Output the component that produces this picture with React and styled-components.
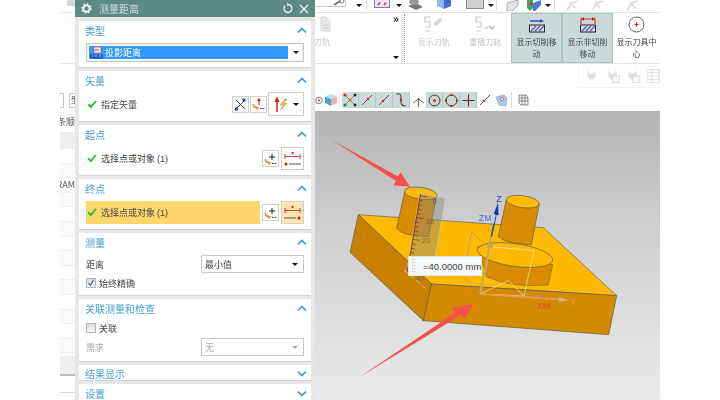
import React from 'react'
import styled, { createGlobalStyle } from 'styled-components'

const GlobalStyle = createGlobalStyle`
  html, body {
    margin: 0;
    padding: 0;
    background: #fff;
  }
  body {
    font-family: "Noto Sans CJK SC", "Liberation Sans", sans-serif;
  }
`

const Page = styled.div`
  width: 720px;
  height: 400px;
  overflow: hidden;
  background: #fff;
  padding-left: 60px;
  box-sizing: border-box;
`

const Shot = styled.div`
  width: 600px;
  height: 400px;
  display: flex;
  overflow: hidden;
  filter: blur(0.5px);
`

/* left table column, mostly hidden behind the dialog */
const TableColumn = styled.div`
  width: 15px;
  flex: none;
  display: flex;
  flex-direction: column;
  overflow: hidden;
  color: #555;
  font-size: 9px;
`

const TableTop = styled.div`
  height: 12px;
  border-bottom: 1px solid #e6e6e6;
  display: flex;
  justify-content: flex-end;
`

const TopChip = styled.div`
  width: 8px;
  height: 6px;
  background: #d8d8d4;
`

const TableRibbon = styled.div`
  height: 50px;
  border-bottom: 1px solid #e8e8e8;
`

const InputRow = styled.div`
  height: 15px;
  margin-top: 29px;
  display: flex;
  justify-content: space-between;
`

const TinyInput = styled.div`
  width: ${p => p.$w}px;
  box-sizing: border-box;
  border: 1px solid #c8c8c8;
  border-left-width: ${p => (p.$open ? 0 : 1)}px;
  border-right-width: ${p => (p.$open ? 1 : 0)}px;
  font-size: 8px;
  line-height: 12px;
  padding-left: 1px;
  overflow: hidden;
  color: #444;
`

const TableLabel = styled.div`
  height: 12px;
  line-height: 12px;
  margin-top: 8px;
  white-space: nowrap;
  display: flex;
  justify-content: flex-end;
  overflow: hidden;
`

const HeaderBand = styled.div`
  height: ${p => p.$h}px;
  flex: none;
  margin-top: ${p => p.$top || 0}px;
  background: #eeeeee;
  border-bottom: ${p => (p.$line ? '2px solid #bdbdbd' : '0')};
`

const TableRow = styled.div`
  height: 14.6px;
  flex: none;
  box-sizing: border-box;
  background: ${p => (p.$odd ? '#fafafa' : '#fff')};
  border-bottom: 1px solid #f0f0f0;
  line-height: 14px;
  white-space: nowrap;
  overflow: hidden;
  display: flex;
  justify-content: flex-end;
`

const TableFoot = styled.div`
  height: 16px;
  flex: none;
  border-bottom: 1px solid #d8d8d8;
`

/* measure dialog */
const Dialog = styled.div`
  width: 240px;
  flex: none;
  height: 400px;
  background: #e7e7e7;
  display: flex;
  flex-direction: column;
`

const TitleBar = styled.div`
  height: 17px;
  flex: none;
  background: #5c8b85;
  color: #cfdedb;
  font-size: 10px;
  display: flex;
  align-items: center;
  padding: 0 6px 0 6px;
  gap: 5px;
`

const TitleText = styled.span`
  flex: 1;
  margin-left: 2px;
`

const Sections = styled.div`
  display: flex;
  flex-direction: column;
  gap: 3px;
  padding: 4px 4px 0;
`

const Section = styled.section`
  height: ${p => p.$h}px;
  flex: none;
  box-sizing: border-box;
  background: #fff;
  border-bottom: 1px solid #d2d2d2;
  padding: 0 7px;
`

const SectionHead = styled.div`
  height: ${p => p.$h || 18}px;
  display: flex;
  align-items: center;
  justify-content: space-between;
  margin: 0 -3px 0 -1px;
  color: #4b9ed3;
  font-size: 10px;
`

const Row = styled.div`
  height: ${p => p.$h}px;
  margin-top: ${p => p.$top}px;
  display: flex;
  align-items: center;
  color: #444;
  font-size: 9px;
`

const Grow = styled.div`
  flex: 1;
  display: flex;
  align-items: center;
  gap: 4px;
  padding-left: 1px;
  height: 100%;
  background: ${p => (p.$hot ? '#fdd66e' : 'transparent')};
`

const Latin = styled.span`
  font-family: "Liberation Sans", sans-serif;
  margin-left: -2px;
`

const Caret = styled.span`
  width: 0;
  height: 0;
  border-left: 3px solid transparent;
  border-right: 3px solid transparent;
  border-top: 3px solid ${p => p.$color || '#111'};
  flex: none;
`

const TypeSelect = styled.div`
  height: 19px;
  margin-top: 4px;
  box-sizing: border-box;
  border: 1px solid #c9c9c9;
  box-shadow: inset 0 0 0 1px #efefef;
  padding: 2px 4px 2px 2px;
  display: flex;
  align-items: center;
  gap: 5px;
`

const TypeValue = styled.div`
  width: 201px;
  height: 100%;
  background: #3298fa;
  color: #fff;
  font-size: 9px;
  display: flex;
  align-items: center;
  gap: 2px;
  padding-left: 1px;
  box-sizing: border-box;
`

const IconButton = styled.div`
  width: ${p => p.$big ? 23 : 17}px;
  height: ${p => p.$big ? 23 : 17}px;
  margin-left: ${p => p.$gap ?? 2}px;
  flex: none;
  box-sizing: border-box;
  border: 1px solid #cfcfcf;
  background: ${p => (p.$hot ? '#fde7ae' : '#fff')};
  display: flex;
  align-items: center;
  justify-content: center;
`

const VectorCombo = styled(IconButton)`
  width: 36px;
  height: 24px;
  gap: 4px;
  margin-left: 1px;
`

const Combo = styled.div`
  width: 103px;
  height: 18px;
  margin-left: auto;
  box-sizing: border-box;
  border: 1px solid #c9c9c9;
  padding: 0 5px 0 3px;
  display: flex;
  align-items: center;
  justify-content: space-between;
  color: ${p => (p.$off ? '#aaa' : '#444')};
`

const CheckBox = styled.span`
  width: 10px;
  height: 10px;
  box-sizing: border-box;
  border: 1px solid #b5b5b5;
  background: linear-gradient(#ddd, #f4f4f4);
  margin-right: 3px;
  display: flex;
  align-items: center;
  justify-content: center;
  flex: none;
`

const DimLabel = styled.span`
  color: #aaa;
`

/* right part: ribbon, toolbars and the graphics window */
const Workspace = styled.div`
  flex: 1;
  min-width: 0;
  display: flex;
  flex-direction: column;
`

const QuickBar = styled.div`
  height: 12px;
  flex: none;
  border-bottom: 1px solid #e2e2e2;
  display: flex;
  align-items: flex-start;
  overflow: hidden;
`

const QuickField = styled.div`
  width: 31px;
  height: 7px;
  box-sizing: border-box;
  border-bottom: 1px solid #ccc;
  border-right: 1px solid #ccc;
  display: flex;
  justify-content: flex-end;
  align-items: flex-end;
`

const QuickItem = styled.div`
  margin-left: ${p => p.$ml}px;
  display: flex;
  opacity: ${p => (p.$faint ? 0.35 : 1)};
`

const QuickCaret = styled(Caret)`
  margin: 4px 0 0 ${p => p.$ml}px;
`

const QuickSep = styled.div`
  width: 1px;
  height: 10px;
  background: #ddd;
  margin-left: ${p => p.$ml}px;
`

const Ribbon = styled.div`
  height: 50px;
  flex: none;
  border-bottom: 1px solid #e2e2e2;
  display: flex;
`

const RibbonGroup = styled.div`
  width: 87px;
  flex: none;
  box-sizing: border-box;
  border-right: 1px solid #e4e4e4;
  display: flex;
  justify-content: space-between;
`

const GroupMarks = styled.div`
  width: 10px;
  padding: 0 0 4px;
  display: flex;
  flex-direction: column;
  align-items: center;
  justify-content: space-between;
  font-size: 11px;
  font-weight: 700;
  line-height: 10px;
  color: #222;
`

const Grip = styled.div`
  width: 0;
  margin: 1px 3px 1px 2px;
  border-left: 1px dotted #999;
`

const RibbonTool = styled.div`
  width: ${p => p.$w}px;
  flex: none;
  box-sizing: border-box;
  padding-top: 3px;
  display: flex;
  flex-direction: column;
  align-items: center;
  font-size: 8px;
  line-height: 11.5px;
  text-align: center;
  color: ${p => (p.$faint ? '#c4c4c4' : '#444')};
  background: ${p => (p.$on ? '#c9dad8' : 'transparent')};
  outline: ${p => (p.$on ? '1px solid #aac6c2' : 'none')};
  outline-offset: -1px;
`

const ClippedTool = styled(RibbonTool)`
  width: 18px;
  align-items: flex-end;
  overflow: hidden;
  white-space: nowrap;
`

const ToolLabel = styled.div`
  margin-top: 3px;
  padding: 0 3px;
`

const SubBar = styled.div`
  height: 25px;
  flex: none;
  display: flex;
  justify-content: flex-end;
`

const FadedIcons = styled.div`
  width: 82px;
  height: 24px;
  box-sizing: border-box;
  border-left: 1px solid #eee;
  border-bottom: 1px solid #e6e6e6;
  display: flex;
  align-items: center;
  gap: 6px;
  padding-left: 6px;
  opacity: 0.45;
  overflow: hidden;
`

const ViewBar = styled.div`
  height: 22px;
  flex: none;
  display: flex;
  align-items: center;
  overflow: hidden;
`

const ViewCell = styled.div`
  width: ${p => p.$w || 17}px;
  height: 16px;
  flex: none;
  margin-left: ${p => p.$ml || 0}px;
  display: flex;
  align-items: center;
  justify-content: center;
  box-sizing: border-box;
  background: ${p => (p.$on ? '#c9dad8' : 'transparent')};
  border-right: ${p => (p.$on ? '1px solid #aec8c4' : '0')};
`

const ViewSep = styled.div`
  width: 1px;
  height: 16px;
  flex: none;
  background: #ddd;
  margin: 0 ${p => p.$r || 2}px 0 ${p => p.$l || 2}px;
`

const Viewport = styled.div`
  flex: 1;
  position: relative;
  overflow: hidden;
  background: linear-gradient(#b4b4b4 0%, #cfcfd0 40%, #e9eaeb 100%);
`

const Scene = styled.svg`
  display: block;
  width: 345px;
  height: 289px;
`

const SceneText = styled.text`
  font-family: "Liberation Sans", sans-serif;
  font-size: ${p => p.$size || 27}px;
  fill: ${p => p.$fill};
`

const ValueTag = styled.div`
  position: absolute;
  left: 93px;
  top: 145px;
  width: 74px;
  height: 20px;
  box-sizing: border-box;
  background: #f4f8f8;
  border: 1px solid #e4e4e4;
  display: flex;
  align-items: center;
  padding-left: 2px;
  font-family: "Liberation Sans", sans-serif;
  font-size: 9.5px;
  color: #444;
  white-space: nowrap;
`

const TagGrip = styled.div`
  width: 5px;
  height: 16px;
  flex: none;
  margin-right: 7px;
  background-image: radial-gradient(#aaa 35%, transparent 40%);
  background-size: 2.5px 3px;
`

/* drawings */
const Chevron = ({ down }) => (
  <svg width="10" height="7" viewBox="0 0 10 7">
    <path d={down ? 'M1 1.5 L5 5.5 L9 1.5' : 'M1 5.5 L5 1.5 L9 5.5'} fill="none" stroke="#3a9ad9" strokeWidth="1.7" />
  </svg>
)

const Check = () => (
  <svg width="10" height="9" viewBox="0 0 10 9">
    <path d="M0.5 5 L2 3.6 L3.8 5.4 L8.4 0.6 L9.6 1.6 L3.9 8.4 Z" fill="#25c03a" />
  </svg>
)

const SmallCheck = () => (
  <svg width="8" height="8" viewBox="0 0 8 8">
    <path d="M1.5 4 L3.3 6.4 L6.5 1" fill="none" stroke="#4a5aa8" strokeWidth="1.2" />
  </svg>
)

const Gear = () => (
  <svg width="11" height="11" viewBox="0 0 11 11">
    <circle cx="5.5" cy="5.5" r="3.2" fill="none" stroke="#eef3f2" strokeWidth="2" />
    <circle cx="5.5" cy="5.5" r="4.6" fill="none" stroke="#eef3f2" strokeWidth="1.4" strokeDasharray="1.6 2" />
  </svg>
)

const Reset = () => (
  <svg width="11" height="11" viewBox="0 0 11 11">
    <path d="M2 2.8 A4 4 0 1 0 5.5 1.5" fill="none" stroke="#eef3f2" strokeWidth="1.3" />
    <path d="M4 0 L7 1.6 L4.4 3.4 Z" fill="#eef3f2" />
  </svg>
)

const Close = () => (
  <svg width="10" height="10" viewBox="0 0 10 10">
    <path d="M1 1 L9 9 M9 1 L1 9" stroke="#f2f6f5" strokeWidth="1.4" />
  </svg>
)

const ProjectIcon = () => (
  <svg width="13" height="13" viewBox="0 0 13 13">
    <rect x="4" y="1" width="7" height="6" fill="#f3e9ea" stroke="#b44" strokeWidth="0.6" />
    <path d="M1 12 H12 M1 8 V12 M4 8 V12 M8 8 V12 M12 8 V12" stroke="#123a9a" strokeWidth="1" />
    <path d="M5 4 H9" stroke="#d33" strokeWidth="1" />
  </svg>
)

const CrossIcon = () => (
  <svg width="13" height="13" viewBox="0 0 13 13">
    <path d="M2 2 L11 11 M11 2 L2 11" stroke="#333" strokeWidth="0.9" />
    <rect x="8.5" y="0.5" width="3" height="3" fill="#1f3fd0" />
    <rect x="1" y="9.5" width="3" height="3" fill="#1f3fd0" />
  </svg>
)

const Swoosh = () => <path d="M1 7 Q2 11 6 11 L4.6 12.6 M6 11 L3.8 9.8" fill="none" stroke="#e8842a" strokeWidth="1.4" />

const Dashes = () => <path d="M8 11.5 H13" stroke="#333" strokeWidth="1.1" strokeDasharray="1 0.6" />

const UpPickIcon = () => (
  <svg width="14" height="14" viewBox="0 0 14 14">
    <Swoosh />
    <Dashes />
    <path d="M7 8 V2" stroke="#c22" strokeWidth="1" />
    <path d="M5 4 L7 0.8 L9 4 Z" fill="#c22" />
  </svg>
)

const PlusPickIcon = () => (
  <svg width="14" height="14" viewBox="0 0 14 14">
    <Swoosh />
    <Dashes />
    <path d="M8 2 V8 M5 5 H11" stroke="#222" strokeWidth="1" />
  </svg>
)

const BoltVectorIcon = () => (
  <svg width="16" height="18" viewBox="0 0 16 18">
    <path d="M4 17 V6" stroke="#c22" strokeWidth="1.5" />
    <path d="M1.5 7 L4 1.5 L6.5 7 Z" fill="#d11" />
    <path d="M12 4 L7 10 L10 10 L7.5 15 L14 8.5 L11 8.5 L14 4 Z" fill="#f0c840" stroke="#9a8a50" strokeWidth="0.5" />
  </svg>
)

const MeasureIcon = ({ right }) => (
  <svg width="19" height="19" viewBox="0 0 19 19">
    <path d="M2 5 V10 M17 5 V10 M2 7.5 H17" stroke="#d22" strokeWidth="0.9" />
    <rect x="8.5" y="3" width="2" height="2" fill="#d22" />
    <path d={right ? 'M1 15 H13' : 'M6 15 H18'} stroke="#555" strokeWidth="1" />
    <circle cx={right ? 16 : 3} cy="15" r="1.5" fill="#d11" />
  </svg>
)

const FadedDocIcon = () => (
  <svg width="16" height="17" viewBox="0 0 16 17">
    <path d="M4 1 H9 L13 6 V15 H4 Z" fill="#e8e8e8" stroke="#d4d4d4" />
    <path d="M6 9 H11 M6 12 H11" stroke="#ccc" />
  </svg>
)

const PathIcon = ({ replay }) => (
  <svg width="20" height="17" viewBox="0 0 20 17" opacity="0.7">
    <path d="M7 1 H1 V6 H6 V11 H1 M1 15 H6" fill="none" stroke="#b4b4b4" strokeWidth="1.2" />
    {replay
      ? <path d="M10 13 Q14 8 18 13 M18 13 L19 10 M18 13 L15 12" fill="none" stroke="#999" strokeWidth="1.1" />
      : <path d="M9 8 L14 3 L18 2 L17 6 L12 10 Z" fill="#c4c4c4" />}
  </svg>
)

const CutMoveIcon = ({ rapid }) => (
  <svg width="18" height="17" viewBox="0 0 18 17">
    {rapid
      ? <path d="M2 8 V3 H16 V8" fill="none" stroke="#d22" strokeWidth="1.1" />
      : <path d="M2 5 H13" stroke="#2a5fb8" strokeWidth="1.6" />}
    {rapid ? <path d="M5 1 L2 3 L5 5 Z M13 1 L16 3 L13 5 Z" fill="#d22" /> : <path d="M12 3 L16 5 L12 7 Z" fill="#2a5fb8" />}
    <rect x="1.5" y="9" width="15" height="7" fill="#d9d7ee" stroke="#222" />
    <path d="M3 15 L8 10 M7 15 L12 10 M11 15 L16 10" stroke="#5a58b0" strokeWidth="1.2" />
  </svg>
)

const CenterIcon = () => (
  <svg width="17" height="17" viewBox="0 0 17 17">
    <circle cx="8.5" cy="8.5" r="7.5" fill="#fff" stroke="#666" />
    <path d="M6.5 8.5 H10.5 M8.5 6.5 V10.5" stroke="#e11" strokeWidth="1.2" />
  </svg>
)

const FadedPartIcon = ({ variant }) => (
  <svg width="18" height="18" viewBox="0 0 18 18">
    <path d="M3 2 L6 6 L10 6 L13 2 L13 10 L8 15 L3 10 Z" fill="#bbb" />
    {variant ? <rect x="8" y="9" width="9" height="8" fill="#eee" stroke="#aaa" /> : null}
  </svg>
)

const FadedGrid = () => (
  <svg width="16" height="18" viewBox="0 0 16 18">
    <path d="M1 1 H15 V17 H1 Z M1 5 H15 M1 9 H15 M1 13 H15 M6 1 V17" fill="none" stroke="#aaa" />
  </svg>
)

const Cube = () => (
  <svg width="14" height="14" viewBox="0 0 14 14">
    <path d="M7 1 L13 3.5 L7 6 L1 3.5 Z" fill="#b9dcf5" />
    <path d="M1 3.5 L7 6 V13 L1 10 Z" fill="#4b9ee0" />
    <path d="M13 3.5 L7 6 V13 L13 10 Z" fill="#e9b9a8" />
  </svg>
)

const SnapSet = () => (
  <svg width="14" height="14" viewBox="0 0 14 14">
    <circle cx="7" cy="7" r="2" fill="#f3c52c" />
    <path d="M2 2 L12 12 M12 2 L2 12" stroke="#555" strokeWidth="0.6" />
    <circle cx="2" cy="2" r="1.5" fill="#d22" />
    <circle cx="12" cy="2" r="1.5" fill="#222" />
    <circle cx="2" cy="12" r="1.5" fill="#1a8a3a" />
    <circle cx="12" cy="12" r="1.5" fill="#222" />
  </svg>
)

const LineSnap = ({ dot = 5 }) => (
  <svg width="12" height="12" viewBox="0 0 12 12">
    <path d="M1 11 L11 1" stroke="#555" strokeWidth="1" />
    <circle cx={dot} cy={12 - dot} r="1.3" fill="#d22" />
  </svg>
)

const CurveSnap = () => (
  <svg width="12" height="14" viewBox="0 0 12 14">
    <path d="M1 1 H4 Q6 1 6 5 V9 Q6 13 11 13" fill="none" stroke="#444" strokeWidth="1.1" />
    <circle cx="6" cy="7" r="1.2" fill="#d22" />
  </svg>
)

const ForkSnap = () => (
  <svg width="13" height="13" viewBox="0 0 13 13">
    <path d="M6.5 13 V5 M6.5 5 L1 9 M6.5 5 L12 9" fill="none" stroke="#555" strokeWidth="0.9" />
    <circle cx="6.5" cy="5" r="1" fill="#d22" />
  </svg>
)

const RingSnap = ({ inner }) => (
  <svg width="13" height="13" viewBox="0 0 13 13">
    <circle cx="6.5" cy="6.5" r="5.4" fill="none" stroke="#333" strokeWidth="1" />
    {inner
      ? <circle cx="6.5" cy="6.5" r="1.5" fill="#d22" />
      : <path d="M6.5 0 V2 M6.5 11 V13 M0 6.5 H2 M11 6.5 H13" stroke="#e11" strokeWidth="2" />}
  </svg>
)

const CrossSnap = () => (
  <svg width="13" height="13" viewBox="0 0 13 13">
    <path d="M6.5 0.5 V12.5 M0.5 6.5 H12.5" stroke="#333" strokeWidth="1" />
    <circle cx="6.5" cy="6.5" r="1.3" fill="#d22" />
  </svg>
)

const ShieldSnap = () => (
  <svg width="13" height="13" viewBox="0 0 13 13">
    <path d="M1 3 L9 1 L12 4 L11 12 L4 11 Z" fill="#a8c4ea" stroke="#7d9ccc" strokeWidth="0.6" />
    <circle cx="7" cy="5" r="1.6" fill="#e8f0fb" stroke="#d33" strokeWidth="0.6" />
  </svg>
)

const TableIcon = () => (
  <svg width="11" height="12" viewBox="0 0 11 12">
    <path d="M1 1 H8 L10 3 V11 H3 L1 9 Z M1 4 H10 M1 7 H10 M4 1 V11 M7 1 V11" fill="#f5f5f5" stroke="#666" strokeWidth="0.7" />
  </svg>
)

const QuickIcon = ({ kind }) => {
  if (kind === 'wrench') {
    return (
      <svg width="12" height="7" viewBox="0 0 12 7">
        <path d="M1 6 L7 2" stroke="#777" strokeWidth="2" />
        <circle cx="9" cy="2" r="2" fill="#fff" stroke="#777" />
      </svg>
    )
  }
  if (kind === 'frame') {
    return (
      <svg width="16" height="8" viewBox="0 0 16 8">
        <rect x="0.5" y="-2" width="15" height="9.5" fill="#e8e6f7" stroke="#7a7ac8" />
        <path d="M4 5 L6 2.5 M10 5 L12 2.5" stroke="#d33" strokeWidth="1.6" />
      </svg>
    )
  }
  if (kind === 'tray') {
    return (
      <svg width="17" height="10" viewBox="0 0 17 10">
        <path d="M1 6 L9 3 L16 7 L9 10 Z" fill="#777" />
        <ellipse cx="7" cy="2" rx="5" ry="3" fill="#999" />
      </svg>
    )
  }
  if (kind === 'cube') {
    return (
      <svg width="16" height="9" viewBox="0 0 16 9">
        <path d="M1 0 H8 V9 L1 6 Z" fill="#8fb6ee" />
        <path d="M8 0 H15 V6 L8 9 Z" fill="#3f6cc8" />
      </svg>
    )
  }
  if (kind === 'square') {
    return (
      <svg width="18" height="9" viewBox="0 0 18 9">
        <rect x="0.5" y="-2" width="17" height="10.5" fill="#cfcfcf" stroke="#888" />
      </svg>
    )
  }
  if (kind === 'fold') {
    return (
      <svg width="14" height="11" viewBox="0 0 14 11">
        <path d="M1 3 L12 0 V5 L6 11 H1 Z" fill="#e6e6e6" stroke="#aaa" />
      </svg>
    )
  }
  if (kind === 'foldColor') {
    return (
      <svg width="16" height="11" viewBox="0 0 16 11">
        <path d="M7 3 L15 0 V5 L9 11 H7 Z" fill="#3f7ed8" />
        <path d="M1 0 H7 V8 L4 11 L1 8 Z" fill="#3fa860" />
        <circle cx="5" cy="4" r="1.8" fill="#d33" />
      </svg>
    )
  }
  return (
    <svg width="15" height="11" viewBox="0 0 15 11">
      <path d="M2 10 L7 3 L13 1 M5 2 L10 8" fill="none" stroke="#999" strokeWidth="1.6" />
    </svg>
  )
}

const ruleTicks = [0, 1, 2, 3, 4, 5, 6, 7, 8, 9, 10, 11, 12, 13, 14, 15, 16, 17]

const PartScene = () => (
  <Scene viewBox="-45 -57 1035 867">
    <polygon points="85,254 640,293 860,497 305,462" fill="#ffba00" stroke="#5a5a50" strokeWidth="2" />
    <polygon points="85,254 60,367 280,572 305,462" fill="#c98000" stroke="#5a5a50" strokeWidth="2" />
    <polygon points="305,462 860,497 836,614 280,572" fill="#d48a00" stroke="#5a5a50" strokeWidth="2" />

    <path d="M224 185 L200 295 Q215 318 296 320 L320 195 Z" fill="#d98c00" stroke="#5a5a50" strokeWidth="2" />
    <ellipse cx="272" cy="190" rx="49" ry="18" transform="rotate(8 272 190)" fill="#ffba00" stroke="#5a5a50" strokeWidth="2" />

    <path d="M529 208 L505 320 Q530 342 604 344 L628 222 Z" fill="#d98c00" stroke="#5a5a50" strokeWidth="2" />
    <ellipse cx="578" cy="215" rx="50" ry="18" transform="rotate(8 578 215)" fill="#ffba00" stroke="#5a5a50" strokeWidth="2" />

    <path d="M443 350 L470 440 Q540 474 655 465 L668 404 Z" fill="#d98c00" stroke="#5a5a50" strokeWidth="1.5" />
    <ellipse cx="555" cy="375" rx="114" ry="34" transform="rotate(8 555 375)" fill="#ffba00" stroke="#5a5a50" strokeWidth="2" />

    <polygon points="270,190 346,205 305,440 230,425" fill="#8a8a80" fillOpacity="0.45" stroke="#c9c9c0" strokeWidth="2" />
    <path d="M272 190 L232 425" stroke="#8a3a1a" strokeWidth="3" />
    {ruleTicks.map(i => (
      <path
        key={i}
        d={`M${270 - i * 2.2} ${198 + i * 13} l${i % 5 === 0 ? 22 : 11} 3`}
        stroke="#8a2a10"
        strokeWidth="2"
      />
    ))}
    <SceneText x="308" y="222" $size={21} $fill="#8a3a1a">0</SceneText>
    <SceneText x="288" y="282" $size={21} $fill="#8a3a1a">10</SceneText>
    <SceneText x="276" y="340" $size={21} $fill="#8a5a2a">20</SceneText>
    <SceneText x="258" y="452" $size={21} $fill="#6a6a60">40</SceneText>
    <path d="M222 420 L290 478" stroke="#e4e4e4" strokeWidth="2" strokeDasharray="14 10" />
    <circle cx="272" cy="186" r="6" fill="#b5d84a" />

    <polygon points="450,492 582,498 612,362 482,350" fill="none" stroke="#ece6d4" strokeWidth="2" />
    <path d="M450 492 L400 440 L425 305 L462 340" fill="none" stroke="#8a7fd8" strokeWidth="1.5" />
    <path d="M450 492 L535 452 L582 498" fill="none" stroke="#ece6d4" strokeWidth="2" />

    <path d="M450 492 L480 345" stroke="#c8a752" strokeWidth="6" />
    <polygon points="470,352 482,318 490,354" fill="#c8a752" />
    <path d="M484 320 L492 282" stroke="#1a4fd8" strokeWidth="5" />
    <path d="M493 282 L500 248" stroke="#1a3fb8" strokeWidth="3" />
    <polygon points="491,252 504,218 506,256" fill="#1038b8" />

    <path d="M450 492 L690 508" stroke="#f09a50" strokeWidth="5" />
    <polygon points="686,500 716,510 686,516" fill="#d8b090" />
    <path d="M616 496 L645 506" stroke="#c878d8" strokeWidth="3" />

    <SceneText x="499" y="215" $fill="#2a48c8">Z</SceneText>
    <SceneText x="446" y="272" $fill="#4a70e8">ZM</SceneText>
    <SceneText x="620" y="537" $fill="#d84a30">XM</SceneText>
    <SceneText x="720" y="524" $fill="#f0905a">X</SceneText>

    <polygon points="5,30 203,139 212,127 240,170 190,166 198,153" fill="#f4504c" />
    <polygon points="88,742 375,548 365,534 430,522 404,568 394,554" fill="#f4504c" />
  </Scene>
)

const tableRows = Array.from({ length: 13 }, (_, i) => i)

const App = () => (
  <Page>
    <GlobalStyle />
    <Shot>
      <TableColumn>
        <TableTop><TopChip /></TableTop>
        <TableRibbon />
        <InputRow>
          <TinyInput $w={4} $open />
          <TinyInput $w={6}>型</TinyInput>
        </InputRow>
        <TableLabel>条顺</TableLabel>
        <HeaderBand $h={17} $top={4} />
        <TableRow />
        {tableRows.map(i => (
          <TableRow key={i} $odd={i % 2 === 0}>{i === 1 ? 'RAM' : ''}</TableRow>
        ))}
        <HeaderBand $h={18} $top={3} $line />
        <TableFoot />
      </TableColumn>

      <Dialog>
        <TitleBar>
          <Gear />
          <TitleText>测量距离</TitleText>
          <Reset />
          <Close />
        </TitleBar>
        <Sections>
          <Section $h={47}>
            <SectionHead>类型<Chevron /></SectionHead>
            <TypeSelect>
              <TypeValue><ProjectIcon />投影距离</TypeValue>
              <Caret />
            </TypeSelect>
          </Section>

          <Section $h={51}>
            <SectionHead>矢量<Chevron /></SectionHead>
            <Row $h={24} $top={3}>
              <Grow><Check />指定矢量</Grow>
              <IconButton><CrossIcon /></IconButton>
              <IconButton $gap={1}><UpPickIcon /></IconButton>
              <VectorCombo>
                <BoltVectorIcon />
                <Caret />
              </VectorCombo>
            </Row>
          </Section>

          <Section $h={51}>
            <SectionHead>起点<Chevron /></SectionHead>
            <Row $h={23} $top={4}>
              <Grow><Check />选择点或对象<Latin>(1)</Latin></Grow>
              <IconButton><PlusPickIcon /></IconButton>
              <IconButton $big><MeasureIcon /></IconButton>
            </Row>
          </Section>

          <Section $h={51}>
            <SectionHead>终点<Chevron /></SectionHead>
            <Row $h={23} $top={4}>
              <Grow $hot><Check />选择点或对象<Latin>(1)</Latin></Grow>
              <IconButton><PlusPickIcon /></IconButton>
              <IconButton $big $hot><MeasureIcon right /></IconButton>
            </Row>
          </Section>

          <Section $h={63}>
            <SectionHead>测量<Chevron /></SectionHead>
            <Row $h={18} $top={4}>
              距离
              <Combo>最小值<Caret /></Combo>
            </Row>
            <Row $h={10} $top={5}>
              <CheckBox><SmallCheck /></CheckBox>
              始终精确
            </Row>
          </Section>

          <Section $h={63}>
            <SectionHead>关联测量和检查<Chevron /></SectionHead>
            <Row $h={10} $top={6}>
              <CheckBox />
              关联
            </Row>
            <Row $h={18} $top={5}>
              <DimLabel>需求</DimLabel>
              <Combo $off>无<Caret $color="#aaa" /></Combo>
            </Row>
          </Section>

          <Section $h={16}>
            <SectionHead $h={16}>结果显示<Chevron down /></SectionHead>
          </Section>

          <Section $h={20}>
            <SectionHead>设置<Chevron down /></SectionHead>
          </Section>
        </Sections>
      </Dialog>

      <Workspace>
        <QuickBar>
          <QuickField><QuickItem $ml={0}><QuickIcon kind="wrench" /></QuickItem></QuickField>
          <QuickCaret $ml={10} />
          <QuickSep $ml={4} />
          <QuickItem $ml={7}><QuickIcon kind="frame" /></QuickItem>
          <QuickCaret $ml={6} />
          <QuickItem $ml={5}><QuickIcon kind="tray" /></QuickItem>
          <QuickItem $ml={12}><QuickIcon kind="cube" /></QuickItem>
          <QuickItem $ml={14}><QuickIcon kind="square" /></QuickItem>
          <QuickCaret $ml={4} />
          <QuickSep $ml={2} />
          <QuickItem $ml={9}><QuickIcon kind="fold" /></QuickItem>
          <QuickItem $ml={6}><QuickIcon kind="foldColor" /></QuickItem>
          <QuickCaret $ml={3} />
          <QuickSep $ml={3} />
          <QuickItem $ml={10} $faint><QuickIcon kind="tool" /></QuickItem>
          <QuickItem $ml={10} $faint><QuickIcon kind="tool" /></QuickItem>
          <QuickItem $ml={20} $faint><QuickIcon kind="tool" /></QuickItem>
        </QuickBar>

        <Ribbon>
          <RibbonGroup>
            <ClippedTool $faint>
              <FadedDocIcon />
              <ToolLabel>动刀轨</ToolLabel>
            </ClippedTool>
            <GroupMarks>
              <span>»</span>
              <Caret />
            </GroupMarks>
          </RibbonGroup>
          <Grip />
          <RibbonTool $w={51.5} $faint>
            <PathIcon />
            <ToolLabel>显示刀轨</ToolLabel>
          </RibbonTool>
          <RibbonTool $w={51.5} $faint>
            <PathIcon replay />
            <ToolLabel>重播刀轨</ToolLabel>
          </RibbonTool>
          <RibbonTool $w={51} $on>
            <CutMoveIcon />
            <ToolLabel>显示切削移动</ToolLabel>
          </RibbonTool>
          <RibbonTool $w={51} $on>
            <CutMoveIcon rapid />
            <ToolLabel>显示非切削移动</ToolLabel>
          </RibbonTool>
          <RibbonTool $w={47}>
            <CenterIcon />
            <ToolLabel>显示刀具中心</ToolLabel>
          </RibbonTool>
        </Ribbon>

        <SubBar>
          <FadedIcons>
            <FadedPartIcon />
            <FadedPartIcon variant />
            <FadedPartIcon variant />
            <FadedGrid />
          </FadedIcons>
        </SubBar>

        <ViewBar>
          <ViewCell $w={8}><RingSnap inner /></ViewCell>
          <ViewCell $w={15} $ml={0}><Cube /></ViewCell>
          <ViewSep $l={1} $r={2} />
          <ViewCell $on><SnapSet /></ViewCell>
          <ViewCell $on><LineSnap dot={7} /></ViewCell>
          <ViewCell $on><LineSnap /></ViewCell>
          <ViewCell $on><CurveSnap /></ViewCell>
          <ViewCell $w={16}><ForkSnap /></ViewCell>
          <ViewCell $on><RingSnap inner /></ViewCell>
          <ViewCell $on><RingSnap /></ViewCell>
          <ViewCell $on><CrossSnap /></ViewCell>
          <ViewCell $w={16}><LineSnap /></ViewCell>
          <ViewCell $w={16}><ShieldSnap /></ViewCell>
          <ViewSep $l={2} $r={3} />
          <ViewCell><TableIcon /></ViewCell>
        </ViewBar>

        <Viewport>
          <PartScene />
          <ValueTag><TagGrip />=40.0000 mm</ValueTag>
        </Viewport>
      </Workspace>
    </Shot>
  </Page>
)

export default App
